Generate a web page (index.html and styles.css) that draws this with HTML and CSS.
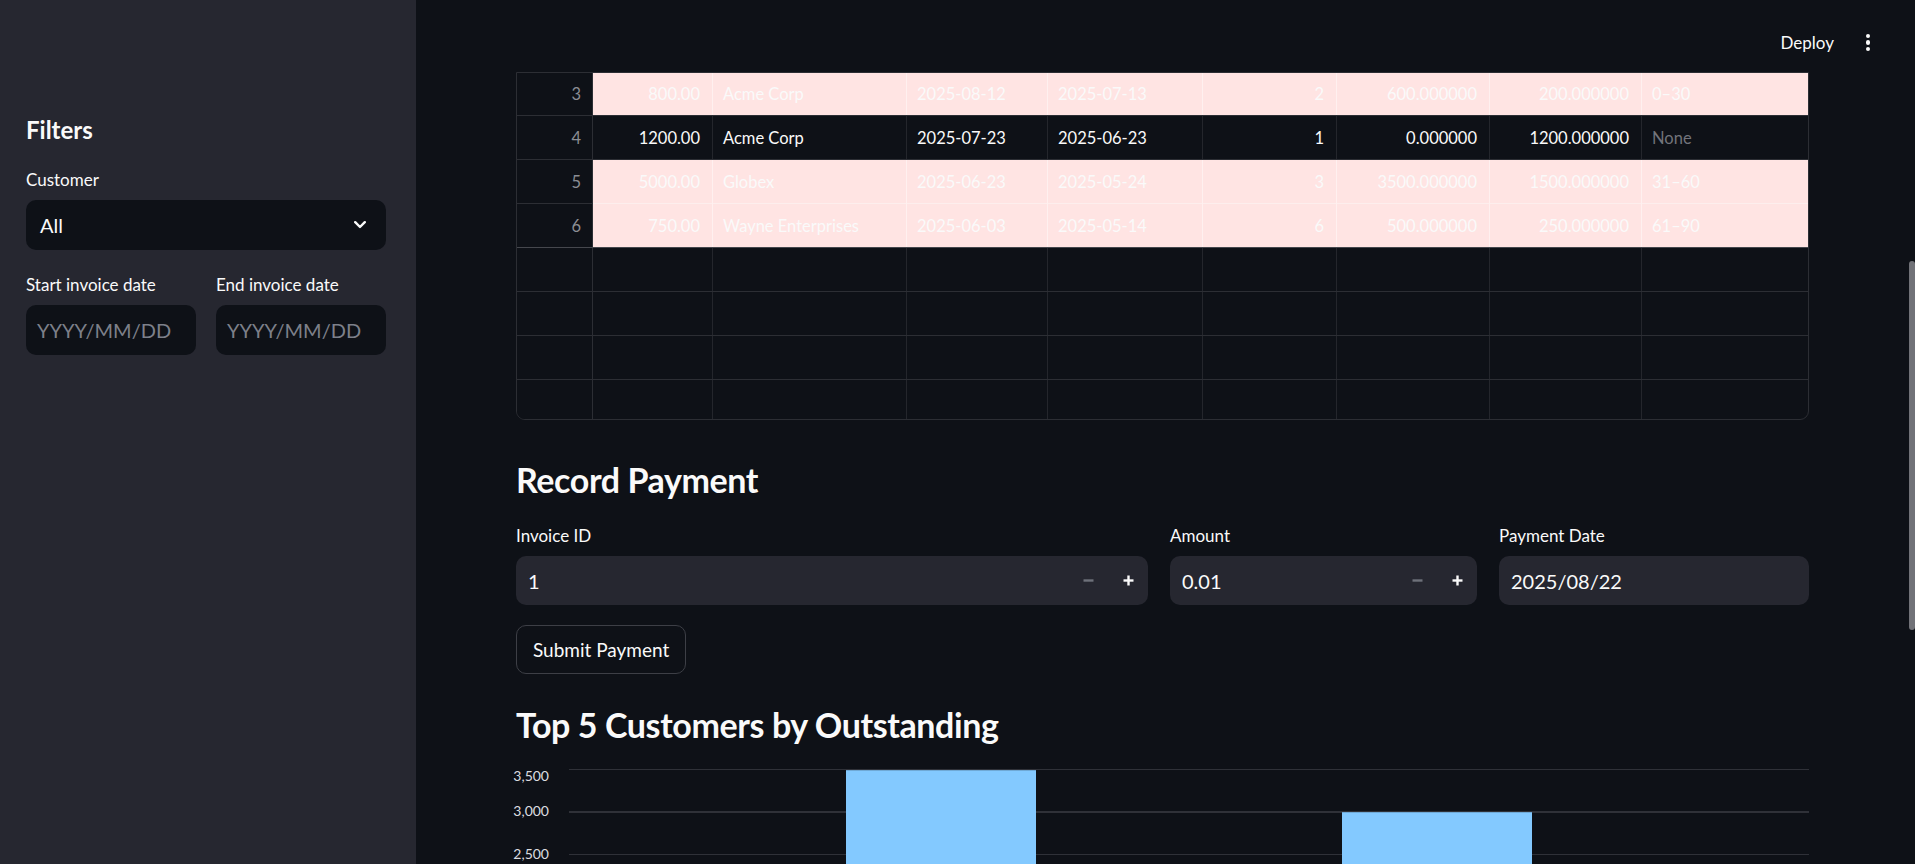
FILE: index.html
```html
<!DOCTYPE html>
<html lang="en">
<head>
<meta charset="utf-8">
<title>Invoices</title>
<link rel="stylesheet" href="styles.css">
</head>
<body>
<div class="app">
  <aside class="sidebar">
    <h2 class="sb-title">Filters</h2>
    <div class="field">
      <div class="lbl">Customer</div>
      <div class="sb-input select">
        <span>All</span>
        <svg class="chev" width="12" height="8" viewBox="0 0 12 8"><polyline points="1.2,1.2 6,6 10.8,1.2" fill="none" stroke="#fafafa" stroke-width="2.4" stroke-linecap="round" stroke-linejoin="round"/></svg>
      </div>
    </div>
    <div class="two-col">
      <div class="field">
        <div class="lbl">Start invoice date</div>
        <div class="sb-input"><span class="ph">YYYY/MM/DD</span></div>
      </div>
      <div class="field">
        <div class="lbl">End invoice date</div>
        <div class="sb-input"><span class="ph">YYYY/MM/DD</span></div>
      </div>
    </div>
  </aside>

  <main class="main">
    <header class="topbar">
      <span class="deploy">Deploy</span>
      <span class="kebab"><i></i><i></i><i></i></span>
    </header>

    <div class="content">
      <div class="table">
        <div class="row pink">
          <div class="c idx">3</div><div class="c num">800.00</div><div class="c">Acme Corp</div><div class="c">2025-08-12</div><div class="c">2025-07-13</div><div class="c num">2</div><div class="c num">600.000000</div><div class="c num">200.000000</div><div class="c">0–30</div>
        </div>
        <div class="row">
          <div class="c idx">4</div><div class="c num">1200.00</div><div class="c">Acme Corp</div><div class="c">2025-07-23</div><div class="c">2025-06-23</div><div class="c num">1</div><div class="c num">0.000000</div><div class="c num">1200.000000</div><div class="c none">None</div>
        </div>
        <div class="row pink pink-next">
          <div class="c idx">5</div><div class="c num">5000.00</div><div class="c">Globex</div><div class="c">2025-06-23</div><div class="c">2025-05-24</div><div class="c num">3</div><div class="c num">3500.000000</div><div class="c num">1500.000000</div><div class="c">31–60</div>
        </div>
        <div class="row pink last-data">
          <div class="c idx">6</div><div class="c num">750.00</div><div class="c">Wayne Enterprises</div><div class="c">2025-06-03</div><div class="c">2025-05-14</div><div class="c num">6</div><div class="c num">500.000000</div><div class="c num">250.000000</div><div class="c">61–90</div>
        </div>
        <div class="row empty"><div class="c idx"></div><div class="c"></div><div class="c"></div><div class="c"></div><div class="c"></div><div class="c"></div><div class="c"></div><div class="c"></div><div class="c"></div></div>
        <div class="row empty"><div class="c idx"></div><div class="c"></div><div class="c"></div><div class="c"></div><div class="c"></div><div class="c"></div><div class="c"></div><div class="c"></div><div class="c"></div></div>
        <div class="row empty"><div class="c idx"></div><div class="c"></div><div class="c"></div><div class="c"></div><div class="c"></div><div class="c"></div><div class="c"></div><div class="c"></div><div class="c"></div></div>
        <div class="row empty final"><div class="c idx"></div><div class="c"></div><div class="c"></div><div class="c"></div><div class="c"></div><div class="c"></div><div class="c"></div><div class="c"></div><div class="c"></div></div>
      </div>

      <h3 class="h3 rp">Record Payment</h3>

      <div class="form-row">
        <div class="field">
          <div class="lbl">Invoice ID</div>
          <div class="m-input">
            <span class="val">1</span>
            <span class="step minus"><svg width="11" height="11" viewBox="0 0 11 11"><line x1="0.5" y1="5.5" x2="10.5" y2="5.5" stroke="currentColor" stroke-width="2.4"/></svg></span>
            <span class="step plus"><svg width="11" height="11" viewBox="0 0 11 11"><line x1="0.5" y1="5.5" x2="10.5" y2="5.5" stroke="currentColor" stroke-width="2.4"/><line x1="5.5" y1="0.5" x2="5.5" y2="10.5" stroke="currentColor" stroke-width="2.4"/></svg></span>
          </div>
        </div>
        <div class="field">
          <div class="lbl">Amount</div>
          <div class="m-input">
            <span class="val">0.01</span>
            <span class="step minus"><svg width="11" height="11" viewBox="0 0 11 11"><line x1="0.5" y1="5.5" x2="10.5" y2="5.5" stroke="currentColor" stroke-width="2.4"/></svg></span>
            <span class="step plus"><svg width="11" height="11" viewBox="0 0 11 11"><line x1="0.5" y1="5.5" x2="10.5" y2="5.5" stroke="currentColor" stroke-width="2.4"/><line x1="5.5" y1="0.5" x2="5.5" y2="10.5" stroke="currentColor" stroke-width="2.4"/></svg></span>
          </div>
        </div>
        <div class="field">
          <div class="lbl">Payment Date</div>
          <div class="m-input date">
            <span class="val">2025/08/22</span>
          </div>
        </div>
      </div>

      <button class="btn">Submit Payment</button>

      <h3 class="h3 top5">Top 5 Customers by Outstanding</h3>

      <div class="chart">
        <div class="y-axis">
          <div class="yl flush">3,500</div>
          <div class="yl">3,000</div>
          <div class="yl">2,500</div>
          <div class="yl">2,000</div>
          <div class="yl">1,500</div>
        </div>
        <div class="plot">
          <div class="band"><div class="bar" style="height:119px"></div></div>
          <div class="band"><div class="bar" style="height:297.5px"></div></div>
          <div class="band"><div class="bar" style="height:102px"></div></div>
          <div class="band"><div class="bar" style="height:255px"></div></div>
          <div class="band"><div class="bar" style="height:21px"></div></div>
        </div>
      </div>
    </div>

    <div class="scroll-thumb"></div>
  </main>
</div>
</body>
</html>
```

FILE: styles.css
```css
* { box-sizing: border-box; }

html, body {
  margin: 0;
  padding: 0;
  width: 1915px;
  height: 864px;
  overflow: hidden;
  background: #0e1117;
  color: #fafafa;
  font-family: "Lato", "Noto Sans", sans-serif;
}

.app {
  display: flex;
  width: 1915px;
  height: 864px;
}

/* ---------- Sidebar ---------- */
.sidebar {
  width: 416px;
  flex: 0 0 416px;
  background: #262730;
  padding: 115px 30px 0 26px;
}

.sb-title {
  margin: 0;
  font-size: 24px;
  line-height: 29px;
  font-weight: 700;
}

.field { display: flex; flex-direction: column; }

.lbl {
  font-size: 17px;
  line-height: 21px;
  height: 21px;
  margin-bottom: 10px;
  white-space: nowrap;
}

.sidebar .field { margin-top: 25px; }
.sidebar .two-col .field { margin-top: 24px; }

.two-col {
  display: grid;
  grid-template-columns: 1fr 1fr;
  gap: 20px;
}

.sb-input {
  height: 50px;
  border-radius: 10px;
  background: #0e1117;
  display: flex;
  align-items: center;
  padding: 0 11px;
  font-size: 20px;
}

.sb-input.select {
  padding: 0 20px 0 14px;
  justify-content: space-between;
}

.ph { color: #7d808a; }

/* ---------- Main ---------- */
.main {
  position: relative;
  flex: 1 1 auto;
  padding: 0 106px 0 100px;
}

.topbar {
  position: absolute;
  top: 0;
  right: 0;
  height: 72px;
  display: flex;
  align-items: flex-start;
  padding: 30px 35px 0 0;
  gap: 22px;
}

.deploy {
  font-size: 17px;
  line-height: 25px;
}

.kebab {
  width: 24px;
  height: 25px;
  display: flex;
  flex-direction: column;
  align-items: center;
  justify-content: center;
  gap: 2.2px;
}
.kebab i {
  display: block;
  width: 4.2px;
  height: 4.2px;
  border-radius: 50%;
  background: #fafafa;
}

.content {
  padding-top: 72px;
}

/* ---------- Table ---------- */
.table {
  border: 1px solid #2c2e34;
  border-radius: 0 0 9px 9px;
  overflow: hidden;
}

.row {
  display: grid;
  grid-template-columns: 76px 120px 194px 141px 155px 134px 153px 152px 1fr;
  height: 44px;
  border-bottom: 1px solid #2c2e34;
  font-size: 16.5px;
}
.row:first-child { height: 43px; }
.row.final { height: 39px; border-bottom: none; }
.row.last-data { border-bottom: 1px solid #45474d; }

.c {
  display: flex;
  align-items: center;
  padding: 0 10px;
  border-right: 1px solid #24262c;
  white-space: nowrap;
  overflow: hidden;
}
.c:last-child { border-right: none; }
.c.num { justify-content: flex-end; padding-right: 12px; }
.c.idx {
  justify-content: flex-end;
  padding-right: 11px;
  color: #8b8d93;
  border-right: 1px solid #2c2e34;
  background: #0e1117;
}
.c.none { color: #72747b; }

.row.pink { background: #ffe4e3; color: #fafafa; }
.row.pink .c { border-right-color: #fff0ef; }
.row.pink .c.idx { border-right-color: #2c2e34; }
.row.pink-next {
  border-bottom: none;
  background-image: linear-gradient(to top, #fdeeed 0, #fdeeed 1px, transparent 1px);
}
.row.pink-next .c.idx { border-bottom: 1px solid #2c2e34; }

/* ---------- Headings ---------- */
.h3 {
  margin: 0;
  font-size: 34px;
  line-height: 42px;
  font-weight: 700;
  letter-spacing: -0.4px;
}
.rp { margin-top: 39px; }
.top5 { margin-top: 30px; }

/* ---------- Form ---------- */
.form-row {
  margin-top: 24px;
  display: grid;
  grid-template-columns: 632px 307px 1fr;
  gap: 22px;
}

.m-input {
  height: 49px;
  border-radius: 10px;
  background: #262730;
  display: flex;
  align-items: center;
  padding-left: 12px;
  font-size: 20px;
}
.m-input .val { flex: 1 1 auto; }

.step {
  width: 40px;
  height: 100%;
  display: flex;
  align-items: center;
  justify-content: center;
}
.step.minus { color: #6e717a; }
.step.plus { color: #fafafa; }

.btn {
  margin-top: 20px;
  height: 49px;
  padding: 0 16px;
  border: 1px solid #3d3f46;
  border-radius: 10px;
  background: #0e1117;
  color: #fafafa;
  font-family: inherit;
  font-size: 19px;
}

/* ---------- Chart ---------- */
.chart {
  margin-top: 23px;
  display: flex;
  gap: 20px;
}

.y-axis {
  width: 33px;
  display: flex;
  flex-direction: column;
  align-items: flex-end;
  font-size: 14px;
  color: #dcdde0;
}
.yl {
  height: 42.5px;
  line-height: 42.5px;
  white-space: nowrap;
}
.yl.flush {
  height: 21.25px;
  line-height: 14px;
  padding-top: 0;
}

.plot {
  flex: 1 1 auto;
  height: 298px;
  display: grid;
  grid-template-columns: repeat(5, 1fr);
  align-items: end;
  background-image: repeating-linear-gradient(to bottom, #2f3138 0, #2f3138 1px, transparent 1px, transparent 42.5px);
}

.band {
  display: flex;
  justify-content: center;
  align-items: flex-end;
  height: 100%;
}
.bar {
  width: 76.7%;
  background: #83c9ff;
  border-top: 1px solid #6fa9d6;
}

.scroll-thumb {
  position: absolute;
  right: 0;
  top: 261px;
  width: 6px;
  height: 369px;
  border-radius: 3px;
  background: #717278;
}
```
